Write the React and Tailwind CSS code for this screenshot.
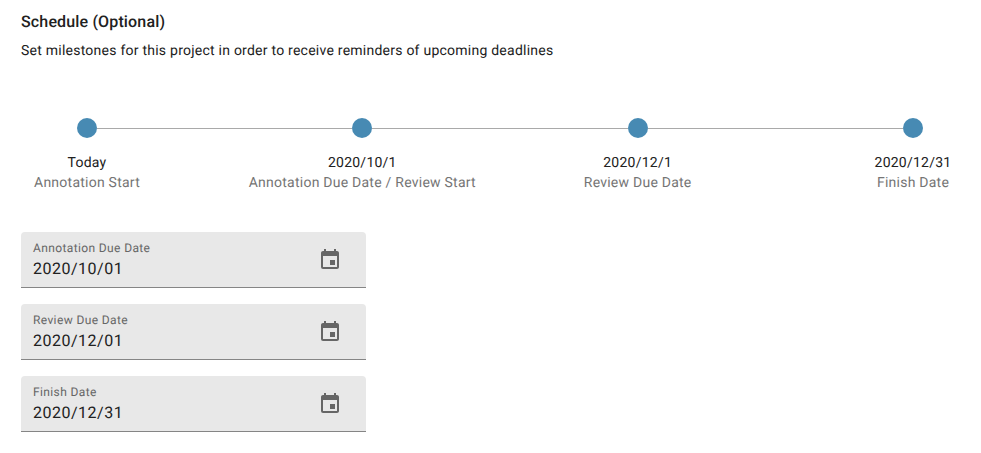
import { MdEvent } from "react-icons/md";

const milestones = [
  { date: "Today", label: "Annotation Start" },
  { date: "2020/10/1", label: "Annotation Due Date / Review Start" },
  { date: "2020/12/1", label: "Review Due Date" },
  { date: "2020/12/31", label: "Finish Date" },
];

const fields = [
  { label: "Annotation Due Date", value: "2020/10/01" },
  { label: "Review Due Date", value: "2020/12/01" },
  { label: "Finish Date", value: "2020/12/31" },
];

function Timeline() {
  return (
    <div className="mt-[57px] flex justify-between pl-[56px] pr-[58px]">
      {milestones.map((m, i) => (
        <div key={m.date} className={i === 0 ? "w-5" : "flex-1"}>
          <div className="flex items-center">
            {i > 0 && <div className="h-px flex-1 bg-[#a9a9a9]" />}
            <div className="size-5 rounded-full bg-[#478ab3]" />
          </div>
          <div className="ml-auto flex w-5 flex-col items-center whitespace-nowrap pt-[15px] text-sm leading-5 tracking-[0.24px]">
            <span className="text-[#212121]">{m.date}</span>
            <span className="text-[#757575]">{m.label}</span>
          </div>
        </div>
      ))}
    </div>
  );
}

function DateField({ label, value }) {
  return (
    <div className="flex h-14 w-[345px] items-center justify-between rounded-t border-b border-[#858585] bg-[#e8e8e8] pl-3 pr-6">
      <div className="pt-0.5">
        <div className="text-xs leading-4 tracking-[0.375px] text-[#666]">{label}</div>
        <div className="mt-px text-base leading-6 tracking-[0.5px] text-[#212121]">{value}</div>
      </div>
      <MdEvent className="size-6 text-[#666]" />
    </div>
  );
}

export default function App() {
  return (
    <main className="h-[453px] w-[981px] overflow-hidden bg-white pl-[21px] pt-[11px] font-['Roboto',sans-serif] text-[#212121] antialiased [text-rendering:geometricPrecision]">
      <h1 className="text-base font-medium leading-[22px] tracking-[0.15px]">Schedule (Optional)</h1>
      <p className="mt-2 text-sm leading-5 tracking-[0.24px]">
        Set milestones for this project in order to receive reminders of upcoming deadlines
      </p>
      <Timeline />
      <div className="mt-[39px] flex flex-col gap-4">
        {fields.map((f) => (
          <DateField key={f.label} {...f} />
        ))}
      </div>
    </main>
  );
}
